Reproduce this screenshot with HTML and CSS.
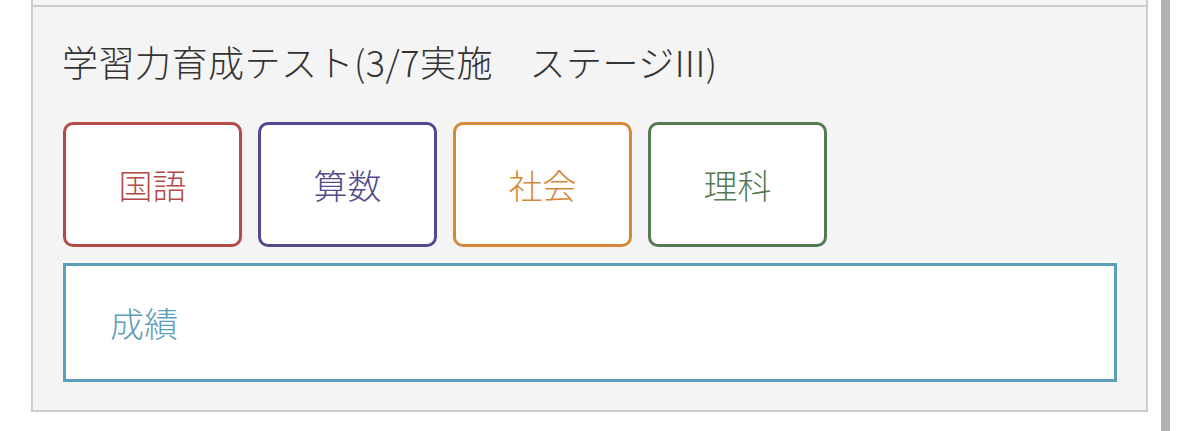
FILE: index.html
```html
<!DOCTYPE html>
<html lang="ja">
<head>
<meta charset="utf-8">
<title>学習力育成テスト</title>
<link rel="stylesheet" href="styles.css">
</head>
<body>
<div class="page">
  <div class="panel">
    <div class="panel-prev"></div>
    <section class="panel-section">
      <h2 class="title">学習力育成テスト(3/7実施　ステージIII)</h2>
      <div class="subjects">
        <a class="subject subject-jp">国語</a>
        <a class="subject subject-math">算数</a>
        <a class="subject subject-social">社会</a>
        <a class="subject subject-science">理科</a>
      </div>
      <a class="results">成績</a>
    </section>
  </div>
  <div class="scrollbar"></div>
</div>
</body>
</html>
```

FILE: styles.css
```css
html, body {
  margin: 0;
  padding: 0;
  background: #ffffff;
}
body {
  font-family: "Noto Sans CJK JP", "Noto Sans", sans-serif;
  width: 1179px;
  height: 431px;
  overflow: hidden;
}
.page {
  display: flex;
  align-items: stretch;
  height: 431px;
}
.panel {
  margin-left: 31px;
  width: 1113px;
  align-self: flex-start;
  border: 2px solid #cccccc;
  border-top: none;
  background: #f4f4f4;
}
.panel-prev {
  height: 5px;
}
.panel-section {
  border-top: 2px solid #cccccc;
  padding: 33px 29px 28px 29px;
}
.title {
  margin: 0 0 40px 0;
  font-size: 36px;
  line-height: 42px;
  font-weight: 300;
  color: #333333;
  letter-spacing: 0.5px;
}
.subjects {
  display: flex;
  gap: 16px;
  margin-left: 1px;
}
.subject {
  box-sizing: border-box;
  width: 179px;
  height: 125px;
  border: 3px solid;
  border-radius: 10px;
  background: #ffffff;
  display: flex;
  align-items: center;
  justify-content: center;
  font-size: 34px;
  line-height: 1;
  font-weight: 300;
}
.subject-jp { border-color: #b34a46; color: #b34a46; }
.subject-math { border-color: #524a8d; color: #524a8d; }
.subject-social { border-color: #d4893a; color: #d4893a; }
.subject-science { border-color: #557a52; color: #557a52; }
.results {
  box-sizing: border-box;
  margin: 16px 0 0 1px;
  height: 119px;
  border: 3px solid #5c9db8;
  background: #ffffff;
  display: flex;
  align-items: center;
  padding-left: 44px;
  font-size: 34px;
  line-height: 1;
  font-weight: 300;
  color: #5c9db8;
}
.scrollbar {
  margin-left: 13px;
  width: 9px;
  background: #b1b1b1;
}
```
